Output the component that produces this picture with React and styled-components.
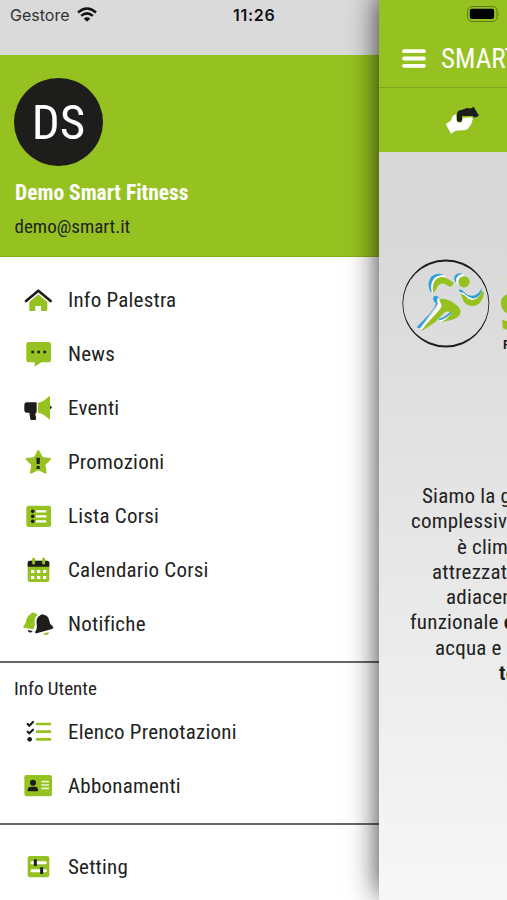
import React from 'react';
import styled, { createGlobalStyle } from 'styled-components';

const green = '#95c220';
const dark = '#1d1d1b';

const HomeIcon = () => (
  <>
    <path
      d='M49 31 L22 54 V78 Q22 81 25 81 H40 V66 H57 V81 H73 Q76 81 76 78 V54 Z'
      fill={green}
    />
    <path
      d='M12 51 L49 20 L86 51'
      fill='none'
      stroke={dark}
      strokeWidth='8'
      strokeLinejoin='round'
      strokeLinecap='round'
    />
  </>
);

const NewsIcon = () => (
  <>
    <path
      d='M21 12 H79 Q87 12 87 20 V65 Q87 73 79 73 H58 L40 85 Q38 86 38 83 V73 H21 Q13 73 13 65 V20 Q13 12 21 12 Z'
      fill={green}
    />
    <path d='M28 38h8v8h-8z M46 38h8v8h-8z M64 38h8v8h-8z' fill={dark} />
  </>
);

const EventsIcon = () => (
  <>
    <circle cx='84' cy='46' r='5' fill={dark} />
    <path
      d='M15 31 H44 V62 H41 Q39 68 42 74 V81 Q42 84 39 84 H28 Q25 84 25 81 L22 62 H15 Q7 62 7 54 V39 Q7 31 15 31 Z'
      fill={dark}
    />
    <path
      d='M48 32 Q66 29 79 14 Q84 10 84 16 V78 Q84 84 79 80 Q66 65 48 62 Z'
      fill={green}
    />
  </>
);

const PromoIcon = () => (
  <>
    <path
      d='M49 15 L60 36 L84 39 L67 56 L71 80 L49 69 L27 80 L31 56 L14 39 L38 36 Z'
      fill={green}
      stroke={green}
      strokeWidth='6'
      strokeLinejoin='round'
    />
    <path d='M43 35 H54 L53 54 H44 Z M44 60h9v9h-9z' fill={dark} />
  </>
);

const ListIcon = () => (
  <>
    <rect x='13' y='17' width='74' height='64' rx='7' fill={green} />
    <g fill={dark}>
      <circle cx='32' cy='34' r='5.5' />
      <circle cx='32' cy='49' r='5.5' />
      <circle cx='32' cy='64' r='5.5' />
    </g>
    <path d='M42 34 H73 M42 49 H73 M42 64 H73' stroke='#fff' strokeWidth='7' />
  </>
);

const CalendarIcon = () => (
  <>
    <rect x='17' y='20' width='65' height='64' rx='7' fill={green} />
    <path d='M24 20 H75 Q82 20 82 27 V38 H17 V27 Q17 20 24 20 Z' fill={dark} />
    <path
      d='M35 15 V27 M65 15 V27'
      stroke={green}
      strokeWidth='9'
      strokeLinecap='round'
    />
    <path
      d='M27 48h10v9h-10z M45 48h10v9h-10z M63 48h10v9h-10z M27 66h10v9h-10z M45 66h10v9h-10z M63 66h10v9h-10z'
      fill='#fff'
    />
  </>
);

const BellsIcon = () => (
  <>
    <path
      d='M26 18 Q30 13 35 14 Q43 15 47 21 Q36 29 38 43 Q40 54 35 61 L36 64 L8 60 Q1 58 6 52 Q12 48 13 36 Q15 24 26 18 Z'
      fill={green}
    />
    <path
      d='M56 21 Q60 17 65 20 Q80 23 82 39 Q83 50 92 55 Q97 60 90 63 L44 76 Q37 76 41 69 Q46 62 44 48 Q41 28 56 21 Z'
      fill={dark}
    />
    <path d='M17 66 L32 69 Q28 75 22 73 Q18 71 17 66 Z' fill={dark} />
    <path d='M63 77 L80 72 Q82 78 75 81 Q68 82 63 77 Z' fill={green} />
  </>
);

const ChecksIcon = () => (
  <>
    <path
      d='M45 24 H84 M45 47 H84 M45 70 H84'
      stroke={green}
      strokeWidth='8'
      strokeLinecap='round'
    />
    <path
      d='M17 24 L22 29 L33 18 M17 47 L22 52 L33 41'
      fill='none'
      stroke={dark}
      strokeWidth='6.5'
      strokeLinecap='round'
    />
    <circle cx='23' cy='70' r='7' fill={dark} />
  </>
);

const CardIcon = () => (
  <>
    <rect x='7' y='15' width='83' height='64' rx='7' fill={green} />
    <circle cx='33' cy='38' r='9' fill={dark} />
    <path
      d='M17 64 V60 Q17 50 27 50 H39 Q48 50 48 60 V64 Z'
      fill={dark}
    />
    <path
      d='M58 35 H81 M58 45 H81 M58 55 H81'
      stroke='#e9f3cf'
      strokeWidth='5'
    />
  </>
);

const SettingIcon = () => (
  <>
    <rect x='17' y='15' width='65' height='64' rx='7' fill={green} />
    <path
      d='M30 35 H70 M30 59 H70'
      stroke='#fff'
      strokeWidth='9'
      strokeLinecap='round'
    />
    <path d='M40 25 V45 M59 49 V69' stroke={dark} strokeWidth='9' />
  </>
);

const mainItems = [
  { label: 'Info Palestra', Icon: HomeIcon },
  { label: 'News', Icon: NewsIcon },
  { label: 'Eventi', Icon: EventsIcon },
  { label: 'Promozioni', Icon: PromoIcon },
  { label: 'Lista Corsi', Icon: ListIcon },
  { label: 'Calendario Corsi', Icon: CalendarIcon },
  { label: 'Notifiche', Icon: BellsIcon },
];

const userItems = [
  { label: 'Elenco Prenotazioni', Icon: ChecksIcon },
  { label: 'Abbonamenti', Icon: CardIcon },
];

const settingItems = [{ label: 'Setting', Icon: SettingIcon }];

const introLines = [
  { text: 'Siamo la g', indent: 43 },
  { text: 'complessiv', indent: 32 },
  { text: 'è clim', indent: 78 },
  { text: 'attrezzat', indent: 53 },
  { text: 'adiacen', indent: 67 },
  { text: 'funzionale ', strong: 'c', indent: 31 },
  { text: 'acqua e', indent: 56 },
  { strong: 'te', indent: 120 },
];

const renderItems = (items) => {
  return items.map(({ label, Icon }) => (
    <StyledMenuItem key={label}>
      <StyledMenuIcon viewBox='0 0 96 96'>
        <Icon />
      </StyledMenuIcon>
      <StyledMenuLabel>{label}</StyledMenuLabel>
    </StyledMenuItem>
  ));
};

const Wifi = () => (
  <StyledWifi viewBox='0 0 60 44'>
    <g fill='none' stroke='#111' strokeWidth='7.5'>
      <path d='M3 16 Q30 -8 57 16' />
      <path d='M12.500 26 Q30 11 47.500 26' />
    </g>
    <path d='M20 34 Q30 26 40 34 L30 44 Z' fill='#111' />
  </StyledWifi>
);

const Battery = () => (
  <StyledBattery viewBox='0 0 98 48'>
    <rect
      x='1.500'
      y='1.500'
      width='88'
      height='45'
      rx='13'
      fill='none'
      stroke='#5d7a12'
      strokeWidth='3'
    />
    <rect x='8' y='8' width='73' height='31' rx='6' fill='#000' />
    <path d='M93 17 Q98 24 93 31 Z' fill='#5d7a12' />
  </StyledBattery>
);

const Handshake = () => (
  <StyledHandshake viewBox='0 0 102 84'>
    <path
      d='M2 55 L19 43 Q20 28 33 25 L34 42 Q36 50 46 50 Q54 48 53 36 L80 34 Q86 38 81 46 Q80 56 74 61 Q70 70 62 72 L32 74 L18 83 Z'
      fill='#fff'
    />
    <path
      d='M86 2 L102 29 L90 35 L82 30 H51 V42 Q50 48 43 48 Q36 48 36 41 V23 Q37 13 50 12 L66 6 Q76 8 78 7 Z'
      fill={dark}
    />
  </StyledHandshake>
);

const Logo = () => (
  <StyledLogo viewBox='90 50 321 275'>
    <path
      fillRule='evenodd'
      d='M97 189 A130.500 132 0 1 1 358 189 A130.500 132 0 1 1 97 189 Z M99.500 189 A128 126 0 1 0 355.500 189 A128 126 0 1 0 99.500 189 Z'
      fill={dark}
    />
    <g fill='#2f9fdc'>
      <path d='M181 154 Q169 128 184 108 Q199 95 221 102 Q200 105 190 119 Q182 134 186 153 Z' />
      <path d='M257 127 Q248 113 257 103 Q264 96 277 99 Q262 107 257 127 Z' />
      <path d='M266 149 Q274 142 283 156 Q296 169 312 165 Q328 160 336 142 Q334 169 315 176 Q290 181 266 149 Z' />
      <path d='M191 168 Q196 162 208 171 Q196 174 203 190 L150 264 L140 260 L180 218 Q190 208 198 190 Q186 178 191 168 Z' />
      <path d='M207 235 Q226 230 245 210 L248 214 Q234 235 207 240 Z' />
    </g>
    <g fill='#fff'>
      <path d='M186 155 Q178 129 194 112 Q210 99 229 107 L205 118 Q190 130 192 158 Z' />
      <path d='M262 130 Q254 115 264 106 Q272 100 283 103 L270 136 Z' />
      <path d='M270 157 Q278 151 287 163 Q303 178 318 172 Q332 165 338 148 L340 158 L310 185 L286 172 Z' />
      <path d='M203 174 L222 180 L212 214 L156 268 L149 265 L200 204 Q207 188 203 174 Z' />
      <path d='M207 241 Q232 235 248 213 L254 218 Q237 241 211 246 Z' />
    </g>
    <g fill={green}>
      <path d='M190 158 Q184 129 200 115 Q215 104 233 115 L251 127 Q249 139 239 138 L219 128 Q203 130 200 144 Z' />
      <circle cx='282' cy='124' r='17' />
      <path d='M272 158 L286 166 Q298 181 313 177 Q327 173 336 150 L342 156 Q338 184 322 193 Q301 202 285 188 Q278 179 272 158 Z' />
      <path d='M207 176 Q221 172 240 181 Q271 196 272 214 Q270 233 241 239 L209 246 Q231 238 244 218 Q240 210 226 214 L194 246 L153 273 Q166 252 188 230 Q213 206 215 195 Z' />
    </g>
    <path d='M392 113 H411' stroke='#d8dfb0' strokeWidth='3' />
    <StyledLogoInitial transform='translate(392 268) skewX(5)'>
      S
    </StyledLogoInitial>
    <StyledLogoCaption x='399' y='325'>
      F
    </StyledLogoCaption>
  </StyledLogo>
);

const Drawer = () => (
  <StyledDrawer>
    <StyledStatusBar>
      <StyledCarrier>Gestore</StyledCarrier>
      <Wifi />
      <StyledClock>11:26</StyledClock>
    </StyledStatusBar>
    <StyledProfile>
      <StyledAvatar>DS</StyledAvatar>
      <StyledName>Demo Smart Fitness</StyledName>
      <StyledEmail>demo@smart.it</StyledEmail>
    </StyledProfile>
    <StyledMenu $top={16} $bottom={10}>
      {renderItems(mainItems)}
    </StyledMenu>
    <StyledMenu $bottom={10} $divided>
      <StyledSectionTitle>Info Utente</StyledSectionTitle>
      {renderItems(userItems)}
    </StyledMenu>
    <StyledMenu $top={15} $divided>
      {renderItems(settingItems)}
    </StyledMenu>
  </StyledDrawer>
);

const HomePage = () => (
  <StyledPage>
    <StyledPageStatus>
      <Battery />
    </StyledPageStatus>
    <StyledToolbar>
      <StyledBurger viewBox='0 0 24 19'>
        <path
          d='M2 2.200 H22 M2 9.500 H22 M2 16.800 H22'
          stroke='#fff'
          strokeWidth='3.800'
          strokeLinecap='round'
        />
      </StyledBurger>
      <StyledToolbarTitle>SMART</StyledToolbarTitle>
    </StyledToolbar>
    <StyledTabs>
      <Handshake />
    </StyledTabs>
    <StyledContent>
      <Logo />
      <StyledIntro>
        {introLines.map(({ text, strong, indent }) => (
          <StyledIntroLine key={indent} $indent={indent}>
            {text}
            {strong && <strong>{strong}</strong>}
          </StyledIntroLine>
        ))}
      </StyledIntro>
    </StyledContent>
  </StyledPage>
);

const App = () => (
  <>
    <GlobalStyle />
    <StyledScreen>
      <Drawer />
      <HomePage />
    </StyledScreen>
  </>
);

export default App;

const GlobalStyle = createGlobalStyle`
  * {
    box-sizing: border-box;
  }

  body {
    margin: 0;
    font-family: 'Roboto Condensed', Roboto, sans-serif;
    font-stretch: 75%;
    color: #222;
  }

  svg {
    display: block;
    flex-shrink: 0;
  }
`;

const StyledScreen = styled.div`
  display: flex;
  width: 507px;
  height: 900px;
  overflow: hidden;
  background: #fff;
`;

const StyledDrawer = styled.aside`
  width: 379px;
  flex-shrink: 0;
`;

const StyledStatusBar = styled.div`
  height: 55px;
  padding: 5px 0 0 10px;
  display: flex;
  align-items: flex-start;
  background: #dadada;
  font-family: Inter, sans-serif;
  font-stretch: 100%;
  line-height: 20px;
`;

const StyledCarrier = styled.span`
  width: 67px;
  font-size: 16px;
  color: #333;
`;

const StyledWifi = styled.svg`
  width: 20px;
  height: 15px;
  margin-top: 2px;
`;

const StyledClock = styled.span`
  margin-left: 136px;
  font-size: 16px;
  font-weight: 600;
  letter-spacing: 0.7px;
  color: #111;
`;

const StyledProfile = styled.header`
  height: 202px;
  padding: 23px 14px 0;
  background: ${green};
  border-bottom: 1px solid #86ae1e;
`;

const StyledAvatar = styled.div`
  width: 89px;
  height: 88px;
  border-radius: 50%;
  display: flex;
  align-items: center;
  justify-content: center;
  background: ${dark};
  color: #fff;
  font-size: 49px;
`;

const StyledName = styled.div`
  margin-top: 14px;
  padding-left: 1px;
  font-size: 21.5px;
  line-height: 26px;
  font-weight: 700;
  color: #fff;
`;

const StyledEmail = styled.div`
  margin-top: 9px;
  padding-left: 0.5px;
  font-size: 19px;
  line-height: 24px;
`;

const StyledMenu = styled.nav`
  padding-top: ${({ $top }) => $top || 0}px;
  padding-bottom: ${({ $bottom }) => $bottom || 0}px;
  border-top: ${({ $divided }) => ($divided ? '2px solid #6a6668' : 'none')};
`;

const StyledMenuItem = styled.div`
  height: 54px;
  padding-left: 22px;
  display: flex;
  align-items: center;
`;

const StyledMenuIcon = styled.svg`
  width: 32px;
  height: 32px;
`;

const StyledMenuLabel = styled.span`
  margin-left: 14px;
  font-size: 21px;
  letter-spacing: 0.22px;
  white-space: nowrap;
`;

const StyledSectionTitle = styled.div`
  height: 42px;
  padding: 14px 14px 0;
  font-size: 19px;
  line-height: 24px;
`;

const StyledPage = styled.main`
  position: relative;
  width: 128px;
  height: 900px;
  flex-shrink: 0;
  background: linear-gradient(#d9d9d9 250px, #f7f7f7 900px);
  box-shadow: 0 -6px 28px rgba(0, 0, 0, 0.8);
`;

const StyledPageStatus = styled.div`
  height: 30px;
  padding: 6px 0 0 88px;
  background: ${green};
`;

const StyledBattery = styled.svg`
  width: 33px;
  height: 16px;
`;

const StyledToolbar = styled.div`
  height: 58px;
  padding-left: 23px;
  display: flex;
  align-items: center;
  gap: 15px;
  overflow: hidden;
  background: ${green};
  border-bottom: 1px solid #7fa51c;
`;

const StyledBurger = styled.svg`
  width: 24px;
  height: 19px;
`;

const StyledToolbarTitle = styled.span`
  font-size: 27px;
  color: #fff;
`;

const StyledTabs = styled.div`
  height: 64px;
  padding: 18px 0 0 66px;
  background: ${green};
`;

const StyledHandshake = styled.svg`
  width: 34px;
  height: 28px;
`;

const StyledContent = styled.div`
  padding-top: 105px;
  overflow: hidden;
`;

const StyledLogo = styled.svg`
  width: 107px;
  height: 92px;
  margin-left: 21px;
`;

const StyledLogoInitial = styled.text`
  font-family: 'Open Sans', sans-serif;
  font-stretch: 100%;
  font-size: 152px;
  font-weight: 800;
  fill: ${green};
`;

const StyledLogoCaption = styled.text`
  font-family: 'Liberation Sans', sans-serif;
  font-size: 38px;
  font-weight: 700;
  fill: ${dark};
`;

const StyledIntro = styled.div`
  margin-top: 135px;
`;

const StyledIntroLine = styled.div`
  padding-left: ${({ $indent }) => $indent}px;
  font-size: 21px;
  letter-spacing: 0.22px;
  line-height: 25.3px;
  white-space: pre;
`;
